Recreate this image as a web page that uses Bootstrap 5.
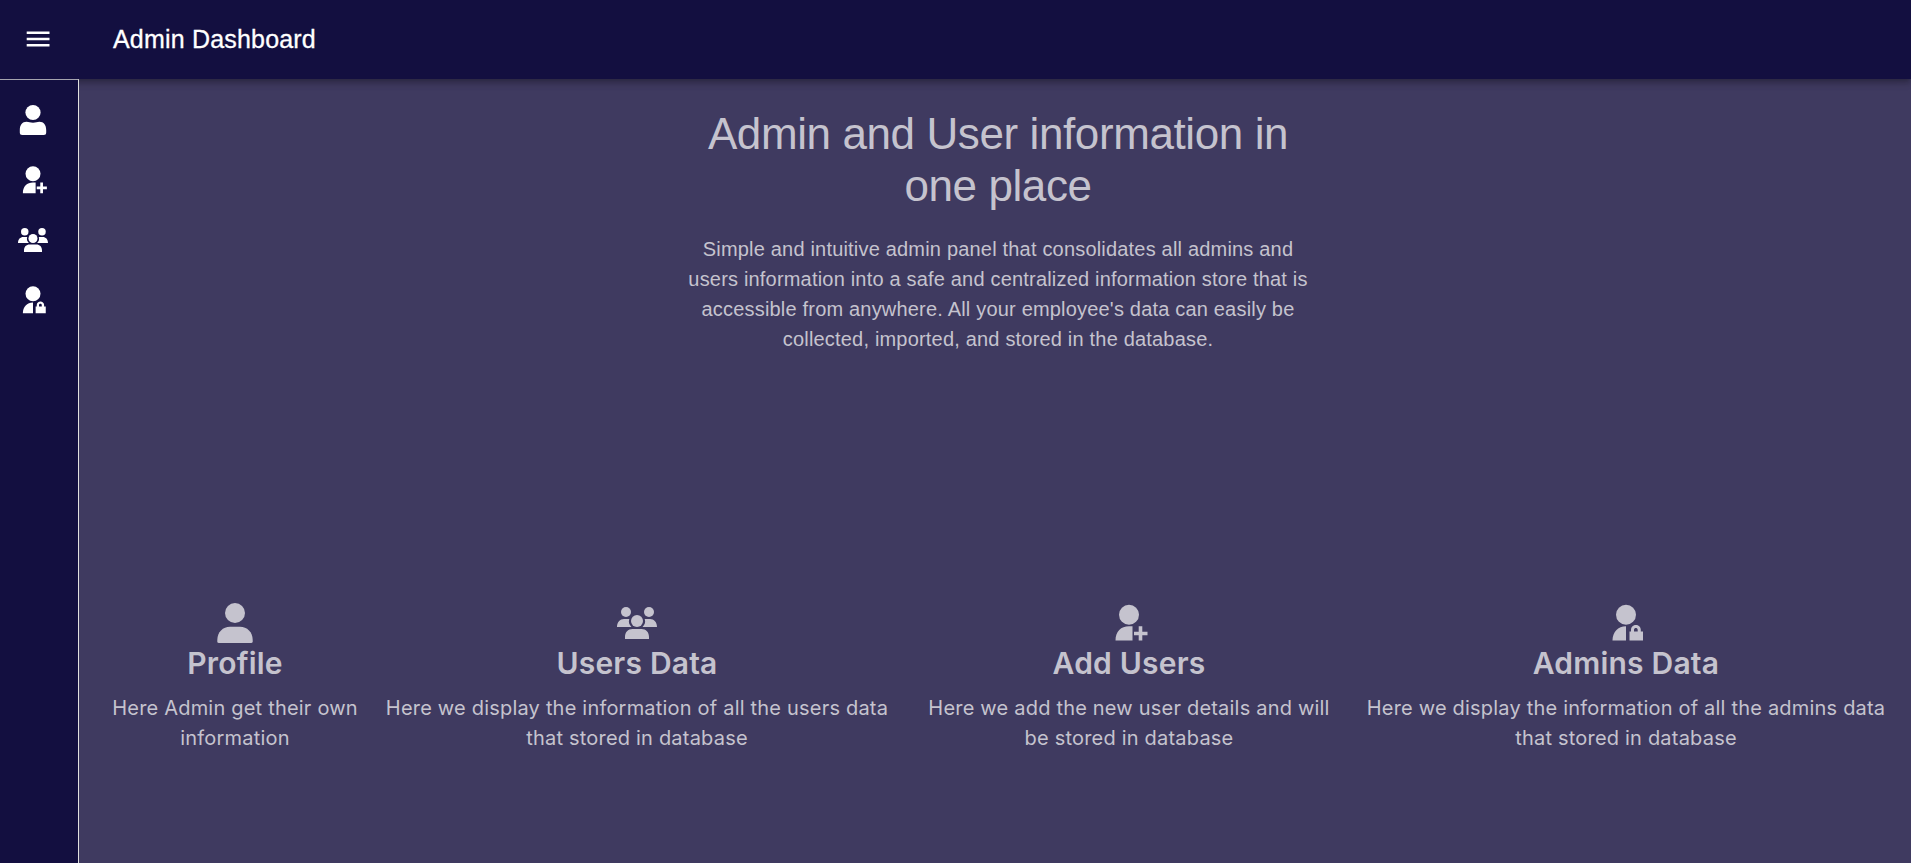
<!DOCTYPE html>
<html lang="en">
<head>
<meta charset="utf-8">
<meta name="viewport" content="width=device-width, initial-scale=1">
<title>Admin Dashboard</title>
<link href="https://cdn.jsdelivr.net/npm/bootstrap@5.3.0/dist/css/bootstrap.min.css" rel="stylesheet">
<style>
body{font-family:"Liberation Sans",Arial,sans-serif;font-size:20px;line-height:30px;background:#3f3a60;color:#c5c3ce;overflow:hidden}
svg{display:block;fill:currentColor;flex:none}
.topbar{height:79px;background:#130f40;color:#fff;box-shadow:0 2px 5px -1px rgba(0,0,0,.2),0 5px 6px rgba(0,0,0,.14),0 1px 12px rgba(0,0,0,.12);z-index:2;padding:0 25px 2px}
.topbar h1{font-size:25px;line-height:40px;letter-spacing:.19px;margin:0 0 0 63px;font-weight:400;-webkit-text-stroke:.3px #fff}
.side{width:79px;background:#130f40;color:#fff;border-top:1px solid #a5a4ae;border-right:1px solid #e0e0e0;padding:10px 0 0 13px;z-index:3}
.side a{height:60px;color:#fff}
.side .small-icon{margin:-1px 0 0 5px}
.intro{width:640px;margin:29px auto 0;position:relative;left:3px}
.intro h2{font-size:44px;line-height:52px;margin:0 0 22px;font-weight:400;letter-spacing:-.4px}
.intro p{letter-spacing:.19px}
.features{font-family:Inter,sans-serif;margin-top:248px;padding-left:20px;letter-spacing:.2px}
.features h3{font-size:30px;line-height:36px;font-weight:600;margin:0 0 12px}
.f1{width:272px}.f2{width:532px}.f3{width:452px}.f4{width:542px}
</style>
</head>
<body>
<svg width="0" height="0" class="position-absolute">
<symbol id="add" viewBox="0 0 40 40"><circle cx="20" cy="11.7" r="10"/><path d="M6.500 37.500C6.500 28.500 12 23.300 20 23.300H23.500V37.500ZM29.700 23.300H33.300V28.700H38.500V32.300H33.300V37.500H29.700V32.300H25V28.700H29.700Z"/></symbol>
<symbol id="group" viewBox="0 0 40 40"><circle cx="9" cy="9" r="5"/><circle cx="32" cy="9" r="5"/><circle cx="20" cy="18" r="6"/><path d="M0 24C0 19 3 16 7 16H12.300C11.300 19 12 21.500 14.500 24ZM40 24C40 19 37 16 33 16H27.700C28.700 19 28 21.500 25.500 24ZM8 36V34C8 29 11 26 15.500 26H24.500C29 26 32 29 32 34V36Z"/></symbol>
<symbol id="lock" viewBox="0 0 40 40"><circle cx="20" cy="11.700" r="10"/><path d="M6.500 37.500C6.500 29 12 23.300 20 23.300V37.500Z"/><path fill-rule="evenodd" d="M23.500 28.500H25V26.700C25 20.300 34.800 20.300 34.800 26.700V28.500H37V37.500H23.500ZM28 28.500H31.700V26.700C31.700 24.500 28 24.500 28 26.700Z"/></symbol>
</svg>
<div class="d-flex flex-column vh-100">
<header class="topbar d-flex align-items-center position-relative">
<svg width="25" height="25" viewBox="0 0 25 25"><path d="M1.700 5.500H24.500V8H1.700ZM1.700 11.800H24.500V14.300H1.700ZM1.700 18H24.500V20.500H1.700Z"/></svg>
<h1>Admin Dashboard</h1>
</header>
<div class="d-flex flex-grow-1">
<nav class="side position-relative">
<a href="#" class="d-flex align-items-center" aria-label="Profile"><svg width="40" height="40"><circle cx="20" cy="12.500" r="7.600"/><path d="M6.800 32.500V30C6.800 25 9.300 21.800 13.500 21.800 16 21.800 17 22.700 20 22.700S24 21.800 26.500 21.800C30.700 21.800 33.200 25 33.200 30V32.500Q33.200 35 30.700 35H9.300Q6.800 35 6.800 32.500Z"/></svg></a>
<a href="#" class="d-flex align-items-center" aria-label="Add Users"><svg class="small-icon" width="30" height="30"><use href="#add"/></svg></a>
<a href="#" class="d-flex align-items-center" aria-label="Users Data"><svg class="small-icon" width="30" height="30"><use href="#group"/></svg></a>
<a href="#" class="d-flex align-items-center" aria-label="Admins Data"><svg class="small-icon" width="30" height="30"><use href="#lock"/></svg></a>
</nav>
<main class="flex-grow-1 text-center">
<section class="intro">
<h2>Admin and User information in<br>one place</h2>
<p class="mb-0">Simple and intuitive admin panel that consolidates all admins and<br>users information into a safe and centralized information store that is<br>accessible from anywhere. All your employee's data can easily be<br>collected, imported, and stored in the database.</p>
</section>
<section class="features d-flex">
<article class="f1 d-flex flex-column align-items-center"><svg width="40" height="43" viewBox="0 0 40 43"><circle cx="20" cy="11" r="10"/><path d="M2.300 39.500V38C2.300 30 8 24.700 15 24.700H25C32 24.700 37.700 30 37.700 38V39.500Q37.700 41 36 41H4Q2.300 41 2.300 39.500Z"/></svg><h3>Profile</h3><p class="mb-0">Here Admin get their own<br>information</p></article>
<article class="f2 d-flex flex-column align-items-center"><svg width="40" height="43" viewBox="0 -1 40 43"><use href="#group" width="40" height="40"/></svg><h3>Users Data</h3><p class="mb-0">Here we display the information of all the users data<br>that stored in database</p></article>
<article class="f3 d-flex flex-column align-items-center"><svg width="40" height="43" viewBox="0 -1 40 43"><use href="#add" width="40" height="40"/></svg><h3>Add Users</h3><p class="mb-0">Here we add the new user details and will<br>be stored in database</p></article>
<article class="f4 d-flex flex-column align-items-center"><svg width="40" height="43" viewBox="0 -1 40 43"><use href="#lock" width="40" height="40"/></svg><h3>Admins Data</h3><p class="mb-0">Here we display the information of all the admins data<br>that stored in database</p></article>
</section>
</main>
</div>
</div>
<script src="https://cdn.jsdelivr.net/npm/bootstrap@5.3.0/dist/js/bootstrap.bundle.min.js"></script>
</body>
</html>
